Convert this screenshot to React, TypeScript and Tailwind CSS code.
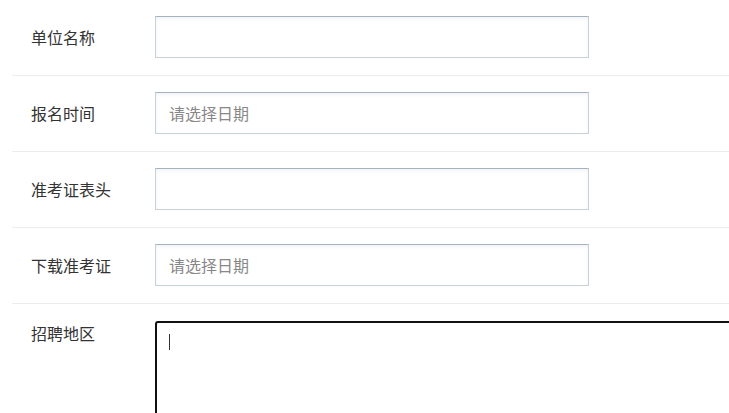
import React from 'react';

const rows = [
  { label: '单位名称', placeholder: '' },
  { label: '报名时间', placeholder: '请选择日期' },
  { label: '准考证表头', placeholder: '' },
  { label: '下载准考证', placeholder: '请选择日期' },
];

export default function App() {
  return (
    <div
      className="h-[413px] w-[729px] overflow-hidden bg-white text-[16px] text-[#333]"
      style={{ fontFamily: '"Noto Sans CJK SC", "Noto Sans", sans-serif' }}
    >
      <div className="ml-3">
        {rows.map((row) => (
          <div
            key={row.label}
            className="flex items-center border-b border-[#ececec] pt-4 pb-[17px]"
          >
            <div className="w-[143px] shrink-0 pl-[19px] leading-6">{row.label}</div>
            <input
              type="text"
              readOnly
              placeholder={row.placeholder}
              className="h-[42px] w-[434px] border border-[#c6d2da] border-t-[#a3b4bf] bg-white px-[13px] leading-6 text-[#333] shadow-[inset_0_2px_3px_rgba(90,90,170,0.07)] outline-none placeholder:text-[#888]"
            />
          </div>
        ))}

        <div className="flex items-start pt-[17px]">
          <div className="w-[143px] shrink-0 pl-[19px] leading-6">招聘地区</div>
          <div className="h-[140px] w-[640px] shrink-0 rounded-[3px] border-2 border-[#111] bg-white pl-[12px] pt-[11px]">
            <div className="h-[16px] w-px bg-[#333]" />
          </div>
        </div>
      </div>
    </div>
  );
}
